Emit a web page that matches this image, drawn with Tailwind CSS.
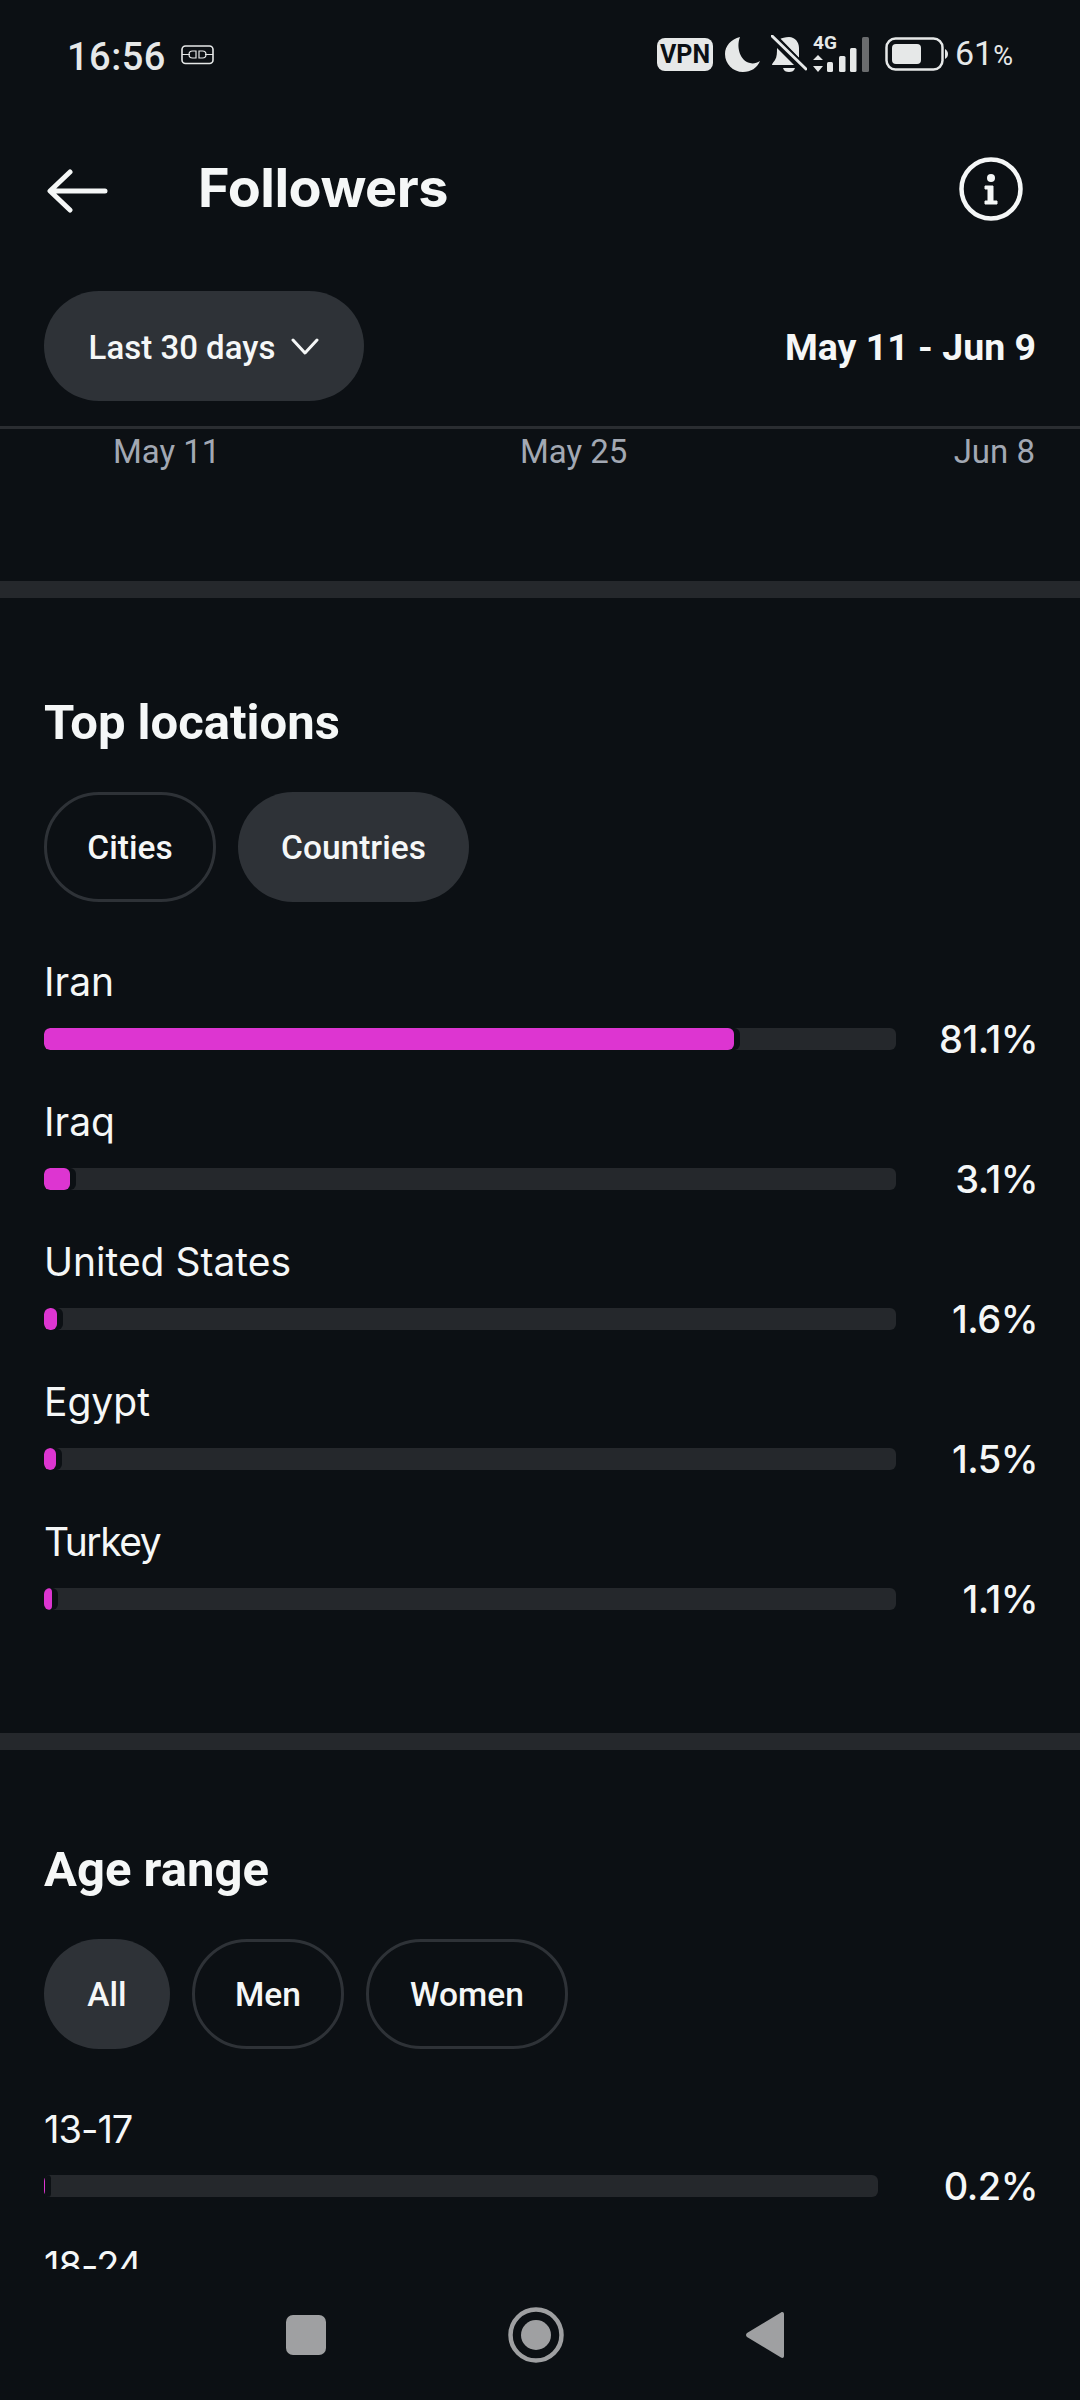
<!DOCTYPE html>
<html lang="en">
<head>
    <meta charset="UTF-8">
    <meta name="viewport" content="width=device-width, initial-scale=1.0">
    <title>Followers</title>
    <script src="https://cdn.jsdelivr.net/npm/@tailwindcss/browser@4"></script>
</head>
<body class="bg-[#0c1014] font-['Inter',sans-serif] text-[#f5f7f7]">
    <div class="w-[1080px] h-[2400px] flex flex-col overflow-hidden">
        <!-- status bar -->
        <div class="h-[108px] shrink-0 flex items-center pl-[67px] pr-[66px] text-[#e6e8e8]">
            <span class="pt-[5px] font-['Roboto',sans-serif] text-[38px] leading-[44px] font-medium tracking-[0.5px]">16:56</span>
            <svg class="ml-[15px] mt-[1px]" width="33" height="20" viewBox="0 0 33 20" fill="none" stroke="currentColor">
                <rect x="1" y="1" width="31" height="17.500" rx="3.500" stroke-width="1.600"/>
                <path d="M1 9.500h8M24 9.500h8M15 6h-3.500a3.500 3.500 0 0 0 0 7H15zM18 6h3.500a3.500 3.500 0 0 1 0 7H18z" stroke-width="1.200"/>
            </svg>
            <div class="ml-auto flex items-center">
                <span class="w-[56px] h-[33px] rounded-[8px] bg-[#e6e8e8] text-[#0c1014] font-['Roboto',sans-serif] font-bold text-[25px] leading-[33px] text-center">VPN</span>
                <svg class="ml-[12px]" width="36" height="36" viewBox="0 0 36 36" fill="currentColor">
                    <path d="M15 1C6 3 0 10 0 18c0 10 8 18 18 18 8 0 14-4 17-11-3 2-7 3-10 2C15 25 11 11 15 1z"/>
                </svg>
                <svg class="ml-[10px]" width="36" height="38" viewBox="0 0 36 38" fill="none">
                    <path d="M18 2c6 0 10 5 10 11v10l4 4L9 4c2-1 5-2 9-2zM6 13l17 17H1c0-2 2-3 3-5 2-3 2-8 2-12zM12 33h12c-1 3-3 4-6 4s-5-1-6-4z" fill="currentColor"/>
                    <path d="M2 1l33 34" stroke="#0c1014" stroke-width="7"/>
                    <path d="M1 1l34 33" stroke="currentColor" stroke-width="3" stroke-linecap="round"/>
                </svg>
                <div class="ml-[6px] relative w-[58px] h-[40px]">
                    <span class="absolute left-0 top-0 font-['Roboto',sans-serif] font-bold text-[19px] leading-[17px]">4G</span>
                    <svg class="absolute inset-0" width="58" height="40" viewBox="0 0 58 40" fill="currentColor">
                        <path d="M5 21l5 5H0zM5 38l-5-6h10z"/>
                        <rect x="14" y="28" width="6" height="10" rx="1.500"/>
                        <rect x="26" y="22" width="6.500" height="16" rx="1.500"/>
                        <rect x="37" y="14" width="6.500" height="24" rx="1.500"/>
                        <rect x="49" y="3" width="7" height="35" rx="1.500" fill="#6a6c6e"/>
                    </svg>
                </div>
                <svg class="ml-[14px]" width="63" height="34" viewBox="0 0 63 34" fill="none">
                    <rect x="1.500" y="1.500" width="56" height="31" rx="9" stroke="currentColor" stroke-width="2.500"/>
                    <rect x="7" y="7" width="29" height="20" rx="4" fill="currentColor"/>
                    <path d="M60 12c2 1 3 3 3 5s-1 4-3 5z" fill="currentColor"/>
                </svg>
                <span class="ml-[7px] mr-[1px] font-['Roboto',sans-serif] text-[34px] leading-[40px]">61<span class="text-[27px]">%</span></span>
            </div>
        </div>

        <!-- header -->
        <div class="h-[164px] shrink-0 flex items-center pl-[47px] pr-[57px]">
            <svg class="mt-[1px]" width="62" height="44" viewBox="0 0 62 44" fill="none" stroke="#f5f7f7" stroke-width="5" stroke-linecap="round" stroke-linejoin="round">
                <path d="M58 22H4M23 3L3 22l20 19"/>
            </svg>
            <h1 class="ml-[89px] mb-[5px] text-[54px] leading-[60px] font-bold tracking-[-0.5px]">Followers</h1>
            <svg class="ml-auto mb-[3px]" width="64" height="64" viewBox="0 0 64 64" fill="none">
                <circle cx="32" cy="32" r="29.500" stroke="#f5f7f7" stroke-width="4.500"/>
                <circle cx="32" cy="21" r="4" fill="#f5f7f7"/>
                <path d="M26 29h8v15h4v3H26v-3h3V32h-3z" fill="#f5f7f7" stroke="#f5f7f7" stroke-linejoin="round"/>
            </svg>
        </div>

        <!-- range -->
        <div class="shrink-0 flex items-center justify-between pl-[44px] pr-[44px] h-[110px] mt-[19px]">
            <button class="h-[110px] w-[320px] rounded-[55px] bg-[#2e3237] flex items-center justify-center gap-[16px] font-['Roboto',sans-serif] text-[33px] font-medium">
                <span class="pt-[4px]">Last 30 days</span>
                <svg width="28" height="17" viewBox="0 0 28 17" fill="none" stroke="#f5f7f7" stroke-width="3" stroke-linecap="round" stroke-linejoin="round">
                    <path d="M2 2l12 13L26 2"/>
                </svg>
            </button>
            <span class="pt-[3px] font-['Roboto',sans-serif] text-[37.500px] font-bold">May 11 - Jun 9</span>
        </div>
        <div class="shrink-0 mt-[25px] h-[3px] bg-[#2a2d31]"></div>

        <!-- chart axis -->
        <div class="shrink-0 h-[152px] relative font-['Roboto',sans-serif] text-[33px] text-[#a2a8b3]">
            <span class="absolute left-[113px] top-[0px] leading-[46px]">May 11</span>
            <span class="absolute left-[520px] top-[0px] leading-[46px]">May 25</span>
            <span class="absolute right-[45px] top-[0px] leading-[46px]">Jun 8</span>
        </div>
        <div class="shrink-0 h-[17px] bg-[#25282c]"></div>

        <!-- top locations -->
        <section class="shrink-0 h-[1135px] pl-[44px] pr-[42px] pt-[95px]">
            <h2 class="font-['Roboto',sans-serif] text-[49px] leading-[60px] font-bold">Top locations</h2>
            <div class="mt-[39px] flex gap-[22px] font-['Roboto',sans-serif] text-[33.500px] font-medium">
                <span class="h-[110px] w-[172px] pt-[3px] rounded-[55px] border-[3px] border-[#2e3237] flex items-center justify-center">Cities</span>
                <span class="h-[110px] w-[231px] pt-[3px] rounded-[55px] bg-[#2e3237] flex items-center justify-center">Countries</span>
            </div>
            <div class="mt-[58px] flex flex-col gap-[39px] text-[39px] leading-[44px]">
                <div>
                    <p>Iran</p>
                    <div class="mt-[13px] flex items-center">
                        <div class="flex-1 h-[22px] rounded-[6px] bg-[#25282c] overflow-hidden"><div class="w-[696px] h-full rounded-[6px] bg-[#0c1014]"><div class="w-[690px] h-full rounded-[6px] bg-[#dd35d1]"></div></div></div>
                        <span class="w-[142px] text-right text-[38px] font-medium tracking-[-0.5px]">81.1%</span>
                    </div>
                </div>
                <div>
                    <p>Iraq</p>
                    <div class="mt-[13px] flex items-center">
                        <div class="flex-1 h-[22px] rounded-[6px] bg-[#25282c] overflow-hidden"><div class="w-[32px] h-full rounded-[6px] bg-[#0c1014]"><div class="w-[26px] h-full rounded-[6px] bg-[#dd35d1]"></div></div></div>
                        <span class="w-[142px] text-right text-[38px] font-medium tracking-[-0.5px]">3.1%</span>
                    </div>
                </div>
                <div>
                    <p>United States</p>
                    <div class="mt-[13px] flex items-center">
                        <div class="flex-1 h-[22px] rounded-[6px] bg-[#25282c] overflow-hidden"><div class="w-[19px] h-full rounded-[6px] bg-[#0c1014]"><div class="w-[13px] h-full rounded-[6px] bg-[#dd35d1]"></div></div></div>
                        <span class="w-[142px] text-right text-[38px] font-medium tracking-[-0.5px]">1.6%</span>
                    </div>
                </div>
                <div>
                    <p>Egypt</p>
                    <div class="mt-[13px] flex items-center">
                        <div class="flex-1 h-[22px] rounded-[6px] bg-[#25282c] overflow-hidden"><div class="w-[18px] h-full rounded-[6px] bg-[#0c1014]"><div class="w-[12px] h-full rounded-[6px] bg-[#dd35d1]"></div></div></div>
                        <span class="w-[142px] text-right text-[38px] font-medium tracking-[-0.5px]">1.5%</span>
                    </div>
                </div>
                <div>
                    <p class="tracking-[-1.500px]">Turkey</p>
                    <div class="mt-[13px] flex items-center">
                        <div class="flex-1 h-[22px] rounded-[6px] bg-[#25282c] overflow-hidden"><div class="w-[14px] h-full rounded-[6px] bg-[#0c1014]"><div class="w-[8px] h-full rounded-[6px] bg-[#dd35d1]"></div></div></div>
                        <span class="w-[142px] text-right text-[38px] font-medium tracking-[-0.5px]">1.1%</span>
                    </div>
                </div>
            </div>
        </section>
        <div class="shrink-0 h-[17px] bg-[#25282c]"></div>

        <!-- age range, cut off by the nav bar -->
        <section class="shrink-0 h-[519px] overflow-hidden pl-[44px] pr-[42px] pt-[90px]">
            <h2 class="font-['Roboto',sans-serif] text-[49px] leading-[60px] font-bold">Age range</h2>
            <div class="mt-[39px] flex gap-[22px] font-['Roboto',sans-serif] text-[33.500px] font-medium">
                <span class="h-[110px] w-[126px] pt-[3px] rounded-[55px] bg-[#2e3237] flex items-center justify-center">All</span>
                <span class="h-[110px] w-[152px] pt-[3px] rounded-[55px] border-[3px] border-[#2e3237] flex items-center justify-center">Men</span>
                <span class="h-[110px] w-[202px] pt-[3px] rounded-[55px] border-[3px] border-[#2e3237] flex items-center justify-center">Women</span>
            </div>
            <div class="mt-[58px] flex flex-col gap-[39px] text-[38px] leading-[44px] tracking-[-1px]">
                <div>
                    <p>13-17</p>
                    <div class="mt-[13px] flex items-center">
                        <div class="flex-1 h-[22px] rounded-[6px] bg-[#25282c] overflow-hidden"><div class="w-[7px] h-full rounded-[6px] bg-[#0c1014]"><div class="w-[1px] h-full bg-[#dd35d1]"></div></div></div>
                        <span class="w-[160px] text-right font-medium tracking-[-0.5px]">0.2%</span>
                    </div>
                </div>
                <p class="-mt-[4px]">18-24</p>
            </div>
        </section>

        <!-- nav bar -->
        <div class="flex-1 flex items-center justify-center gap-[182px] pr-[11px]">
            <div class="w-[40px] h-[40px] rounded-[7px] bg-[#9fa0a2]"></div>
            <svg width="56" height="56" viewBox="0 0 56 56" fill="none">
                <circle cx="28" cy="28" r="25.500" stroke="#9fa0a2" stroke-width="4.500"/>
                <circle cx="28" cy="28" r="15" fill="#9fa0a2"/>
            </svg>
            <svg width="38" height="48" viewBox="0 0 38 48" fill="#9fa0a2">
                <path d="M35 1.500c1.500-1 3-.3 3 1.500v42c0 2-1.700 2.500-3 1.500L1 26c-1.300-1-1.300-3 0-4z"/>
            </svg>
        </div>
    </div>
</body>
</html>
